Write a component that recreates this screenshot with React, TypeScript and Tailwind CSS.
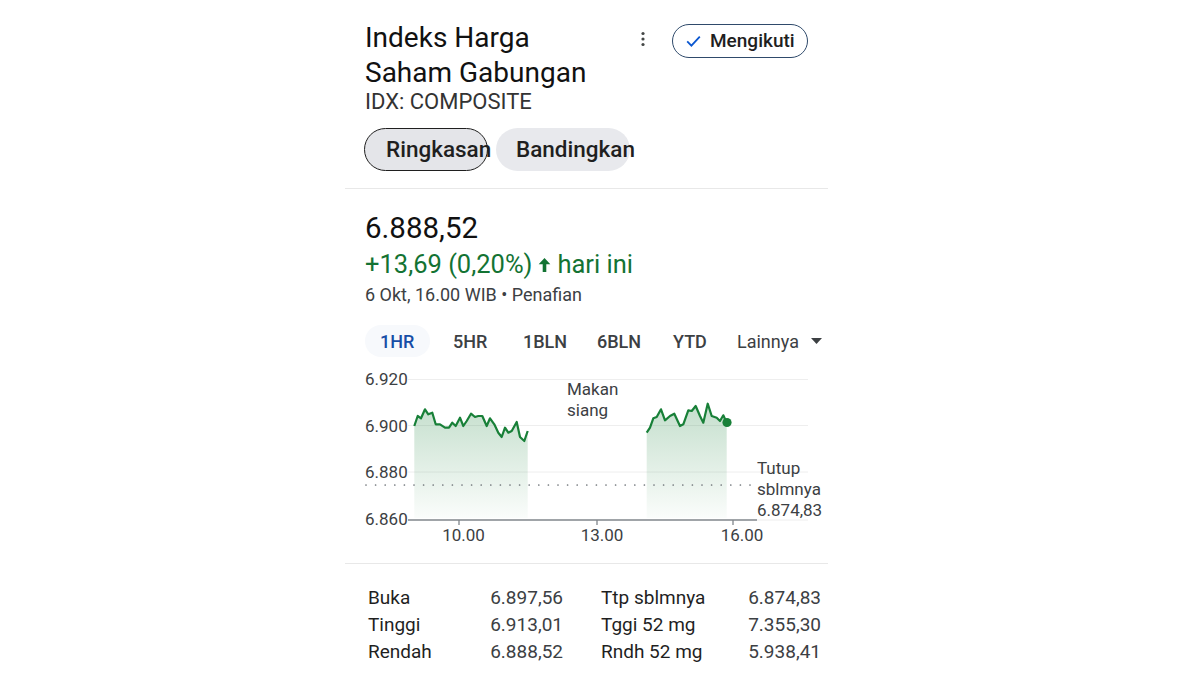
import React from 'react';

const morning: [number, number][] = [
    [414.3, 425], [417.7, 415], [421, 417.3], [425, 408.3], [428.3, 413.3], [432.3, 411.7], [435.7, 423.3],
    [440, 423.3], [445, 426.7], [449, 426.7], [452.3, 421.7], [455.7, 425], [460, 416.7], [463.3, 425],
    [466.7, 420], [471, 412.7], [475, 416], [478.3, 415], [482.3, 415], [486.7, 425], [490, 417.3],
    [494.3, 423.3], [498.3, 431.7], [501.7, 436], [505, 426.7], [508.3, 431.7], [511.7, 430], [516.7, 421],
    [520, 436], [524.3, 440], [527.7, 430],
];

const afternoon: [number, number][] = [
    [646.7, 431.7], [650, 426.7], [653.3, 417.3], [656.7, 416], [661, 408.3], [665, 419.3], [670, 415],
    [674.3, 412.7], [680, 425], [683.3, 423.3], [688.3, 409.3], [691.7, 410], [695.7, 405], [700, 415],
    [703.3, 421.7], [707.7, 402.7], [711.7, 415], [716.7, 416.7], [720, 420], [723.3, 414.3], [726.7, 421.7],
];

const BOTTOM = 517;

const linePath = (pts: [number, number][]) => pts.map((p, i) => `${i ? 'L' : 'M'}${p[0]} ${p[1]}`).join(' ');
const areaPath = (pts: [number, number][]) =>
    `${linePath(pts)} L${pts[pts.length - 1][0]} ${BOTTOM} L${pts[0][0]} ${BOTTOM} Z`;

const ranges = [
    { label: '1HR', w: 'w-[73px]' },
    { label: '5HR', w: 'w-[70px]' },
    { label: '1BLN', w: 'w-[74px]' },
    { label: '6BLN', w: 'w-[76px]' },
    { label: 'YTD', w: 'w-[64px]' },
];

const stats = [
    ['Buka', '6.897,56', 'Ttp sblmnya', '6.874,83'],
    ['Tinggi', '6.913,01', 'Tggi 52 mg', '7.355,30'],
    ['Rendah', '6.888,52', 'Rndh 52 mg', '5.938,41'],
];

const Chart = () => {
    const label = { fontFamily: 'Roboto, sans-serif', fontSize: 17, fill: '#3c4043' } as const;
    return (
        <svg width={483} height={193} viewBox="345 357 483 193" className="block">
            <defs>
                <linearGradient id="fillGreen" x1="0" y1="400" x2="0" y2={BOTTOM} gradientUnits="userSpaceOnUse">
                    <stop offset="0" stopColor="#188038" stopOpacity="0.26" />
                    <stop offset="1" stopColor="#188038" stopOpacity="0.02" />
                </linearGradient>
            </defs>
            {/* grid */}
            <line x1={408} x2={808} y1={378.5} y2={378.5} stroke="#eeeeee" strokeWidth={1} />
            <line x1={408} x2={808} y1={424.5} y2={424.5} stroke="#eeeeee" strokeWidth={1} />
            <line x1={408} x2={808} y1={471} y2={471} stroke="#eeeeee" strokeWidth={1} />
            <line x1={757} x2={808} y1={519} y2={519} stroke="#eeeeee" strokeWidth={1} />

            <path d={areaPath(morning)} fill="url(#fillGreen)" />
            <path d={areaPath(afternoon)} fill="url(#fillGreen)" />

            <line x1={366} x2={757} y1={484} y2={484} stroke="#70757a" strokeWidth={1.7} strokeLinecap="round" strokeDasharray="0 9.6" />

            <path d={linePath(morning)} fill="none" stroke="#188038" strokeWidth={2.2} strokeLinejoin="round" />
            <path d={linePath(afternoon)} fill="none" stroke="#188038" strokeWidth={2.2} strokeLinejoin="round" />
            <circle cx={727} cy={421.5} r={4.6} fill="#188038" />

            {/* axis */}
            <line x1={408} x2={757} y1={519} y2={519} stroke="#80868b" strokeWidth={1.3} />
            <line x1={459} x2={459} y1={519} y2={524} stroke="#80868b" strokeWidth={1.3} />
            <line x1={597} x2={597} y1={519} y2={524} stroke="#80868b" strokeWidth={1.3} />
            <line x1={733} x2={733} y1={519} y2={524} stroke="#80868b" strokeWidth={1.3} />

            <text x={365} y={384} {...label}>6.920</text>
            <text x={365} y={430.5} {...label}>6.900</text>
            <text x={365} y={477} {...label}>6.880</text>
            <text x={365} y={524} {...label}>6.860</text>

            <text x={463.5} y={540} textAnchor="middle" {...label}>10.00</text>
            <text x={602} y={540} textAnchor="middle" {...label}>13.00</text>
            <text x={742} y={540} textAnchor="middle" {...label}>16.00</text>

            <text x={567} y={394} {...label}>Makan</text>
            <text x={567} y={415} {...label}>siang</text>

            <text x={757} y={473} {...label}>Tutup</text>
            <text x={757} y={494} {...label}>sblmnya</text>
            <text x={757} y={514.5} {...label}>6.874,83</text>
        </svg>
    );
};

export default function App() {
    return (
        <div className="w-[1200px] h-[675px] bg-white overflow-hidden font-['Roboto','Liberation_Sans',sans-serif] text-[#1f1f1f]">
            <div className="ml-[345px] w-[483px]">
                {/* header */}
                <div className="flex justify-between px-5 pt-5">
                    <div>
                        <div className="text-[28px] leading-[35px] text-[#111111]">
                            Indeks Harga
                            <br />
                            Saham Gabungan
                        </div>
                        <div className="text-[22px] leading-[24px] text-[#333333]">IDX: COMPOSITE</div>
                    </div>
                    <div className="flex items-start mt-[4px]">
                        <svg width="6" height="16" viewBox="0 0 6 16" className="mt-[7px] mr-[26px]">
                            <circle cx="3" cy="2.5" r="1.6" fill="#444746" />
                            <circle cx="3" cy="8" r="1.6" fill="#444746" />
                            <circle cx="3" cy="13.5" r="1.6" fill="#444746" />
                        </svg>
                        <button className="flex items-center h-[34px] w-[136px] rounded-full border border-[#2f4a6b] pl-[13px]">
                            <svg width="15" height="12" viewBox="0 0 15 12" className="mr-[9px]">
                                <path d="M1.2 6.4l4.2 4.2L13.8 1.6" fill="none" stroke="#0b57d0" strokeWidth="1.8" />
                            </svg>
                            <span className="text-[19px] font-medium text-[#1f1f1f]">Mengikuti</span>
                        </button>
                    </div>
                </div>

                {/* tabs */}
                <div className="flex gap-2 pl-[19px] mt-[14px]">
                    <div className="h-[43px] w-[124px] rounded-full border border-[#1f1f1f] bg-[#e4e5e9] pl-[21px] flex items-center whitespace-nowrap overflow-visible">
                        <span className="text-[22.5px] font-medium">Ringkasan</span>
                    </div>
                    <div className="h-[43px] w-[134px] rounded-full bg-[#e8e9ed] pl-[20px] flex items-center whitespace-nowrap">
                        <span className="text-[22.5px] font-medium">Bandingkan</span>
                    </div>
                </div>

                <div className="mt-[17px] h-px bg-[#e8e8e8]" />

                {/* price */}
                <div className="px-5 mt-[22px]">
                    <div className="text-[29.5px] leading-[34px] text-[#111111]">6.888,52</div>
                    <div className="flex items-center text-[25.5px] leading-[36px] text-[#137333] mt-px">
                        <span>+13,69 (0,20%)</span>
                        <svg width="13" height="16" viewBox="0 0 13 16" className="ml-[6px] mr-[6px] mt-[2px]">
                            <path d="M6.5 1L12.3 7.2H8.3V15H4.7V7.2H0.7Z" fill="#137333" />
                        </svg>
                        <span>hari ini</span>
                    </div>
                    <div className="text-[18px] leading-[26px] text-[#3c4043]">6 Okt, 16.00 WIB • Penafian</div>
                </div>

                {/* ranges */}
                <div className="flex items-center pl-5 mt-[17px] h-[32px] text-[18px] text-[#3c4043]">
                    {ranges.map((r, i) => (
                        <div key={r.label} className={`${r.w} h-[32px] flex items-center`}>
                            {i === 0 ? (
                                <div className="w-[65px] h-[32px] rounded-full bg-[#f7f9fc] flex items-center pl-[15px] text-[#174ea6] font-medium">
                                    {r.label}
                                </div>
                            ) : (
                                <span className="pl-[15px] font-medium text-[#3c4043]">{r.label}</span>
                            )}
                        </div>
                    ))}
                    <div className="flex items-center pl-[15px]">
                        <span>Lainnya</span>
                        <svg width="11" height="6" viewBox="0 0 11 6" className="ml-[12px]">
                            <path d="M0 0H11L5.5 6Z" fill="#3c4043" />
                        </svg>
                    </div>
                </div>

                <div className="mt-px">
                    <Chart />
                </div>

                <div className="mt-[12px] h-px bg-[#e8e8e8]" />

                {/* stats */}
                <div className="pl-[23px] pt-[20px] text-[19px] leading-[27px]">
                    {stats.map((s) => (
                        <div key={s[0]} className="flex">
                            <div className="w-[195px] flex justify-between">
                                <span className="text-[#1f1f1f]">{s[0]}</span>
                                <span className="text-[#3c4043]">{s[1]}</span>
                            </div>
                            <div className="ml-[38px] w-[220px] flex justify-between">
                                <span className="text-[#1f1f1f]">{s[2]}</span>
                                <span className="text-[#3c4043]">{s[3]}</span>
                            </div>
                        </div>
                    ))}
                </div>
            </div>
        </div>
    );
}
